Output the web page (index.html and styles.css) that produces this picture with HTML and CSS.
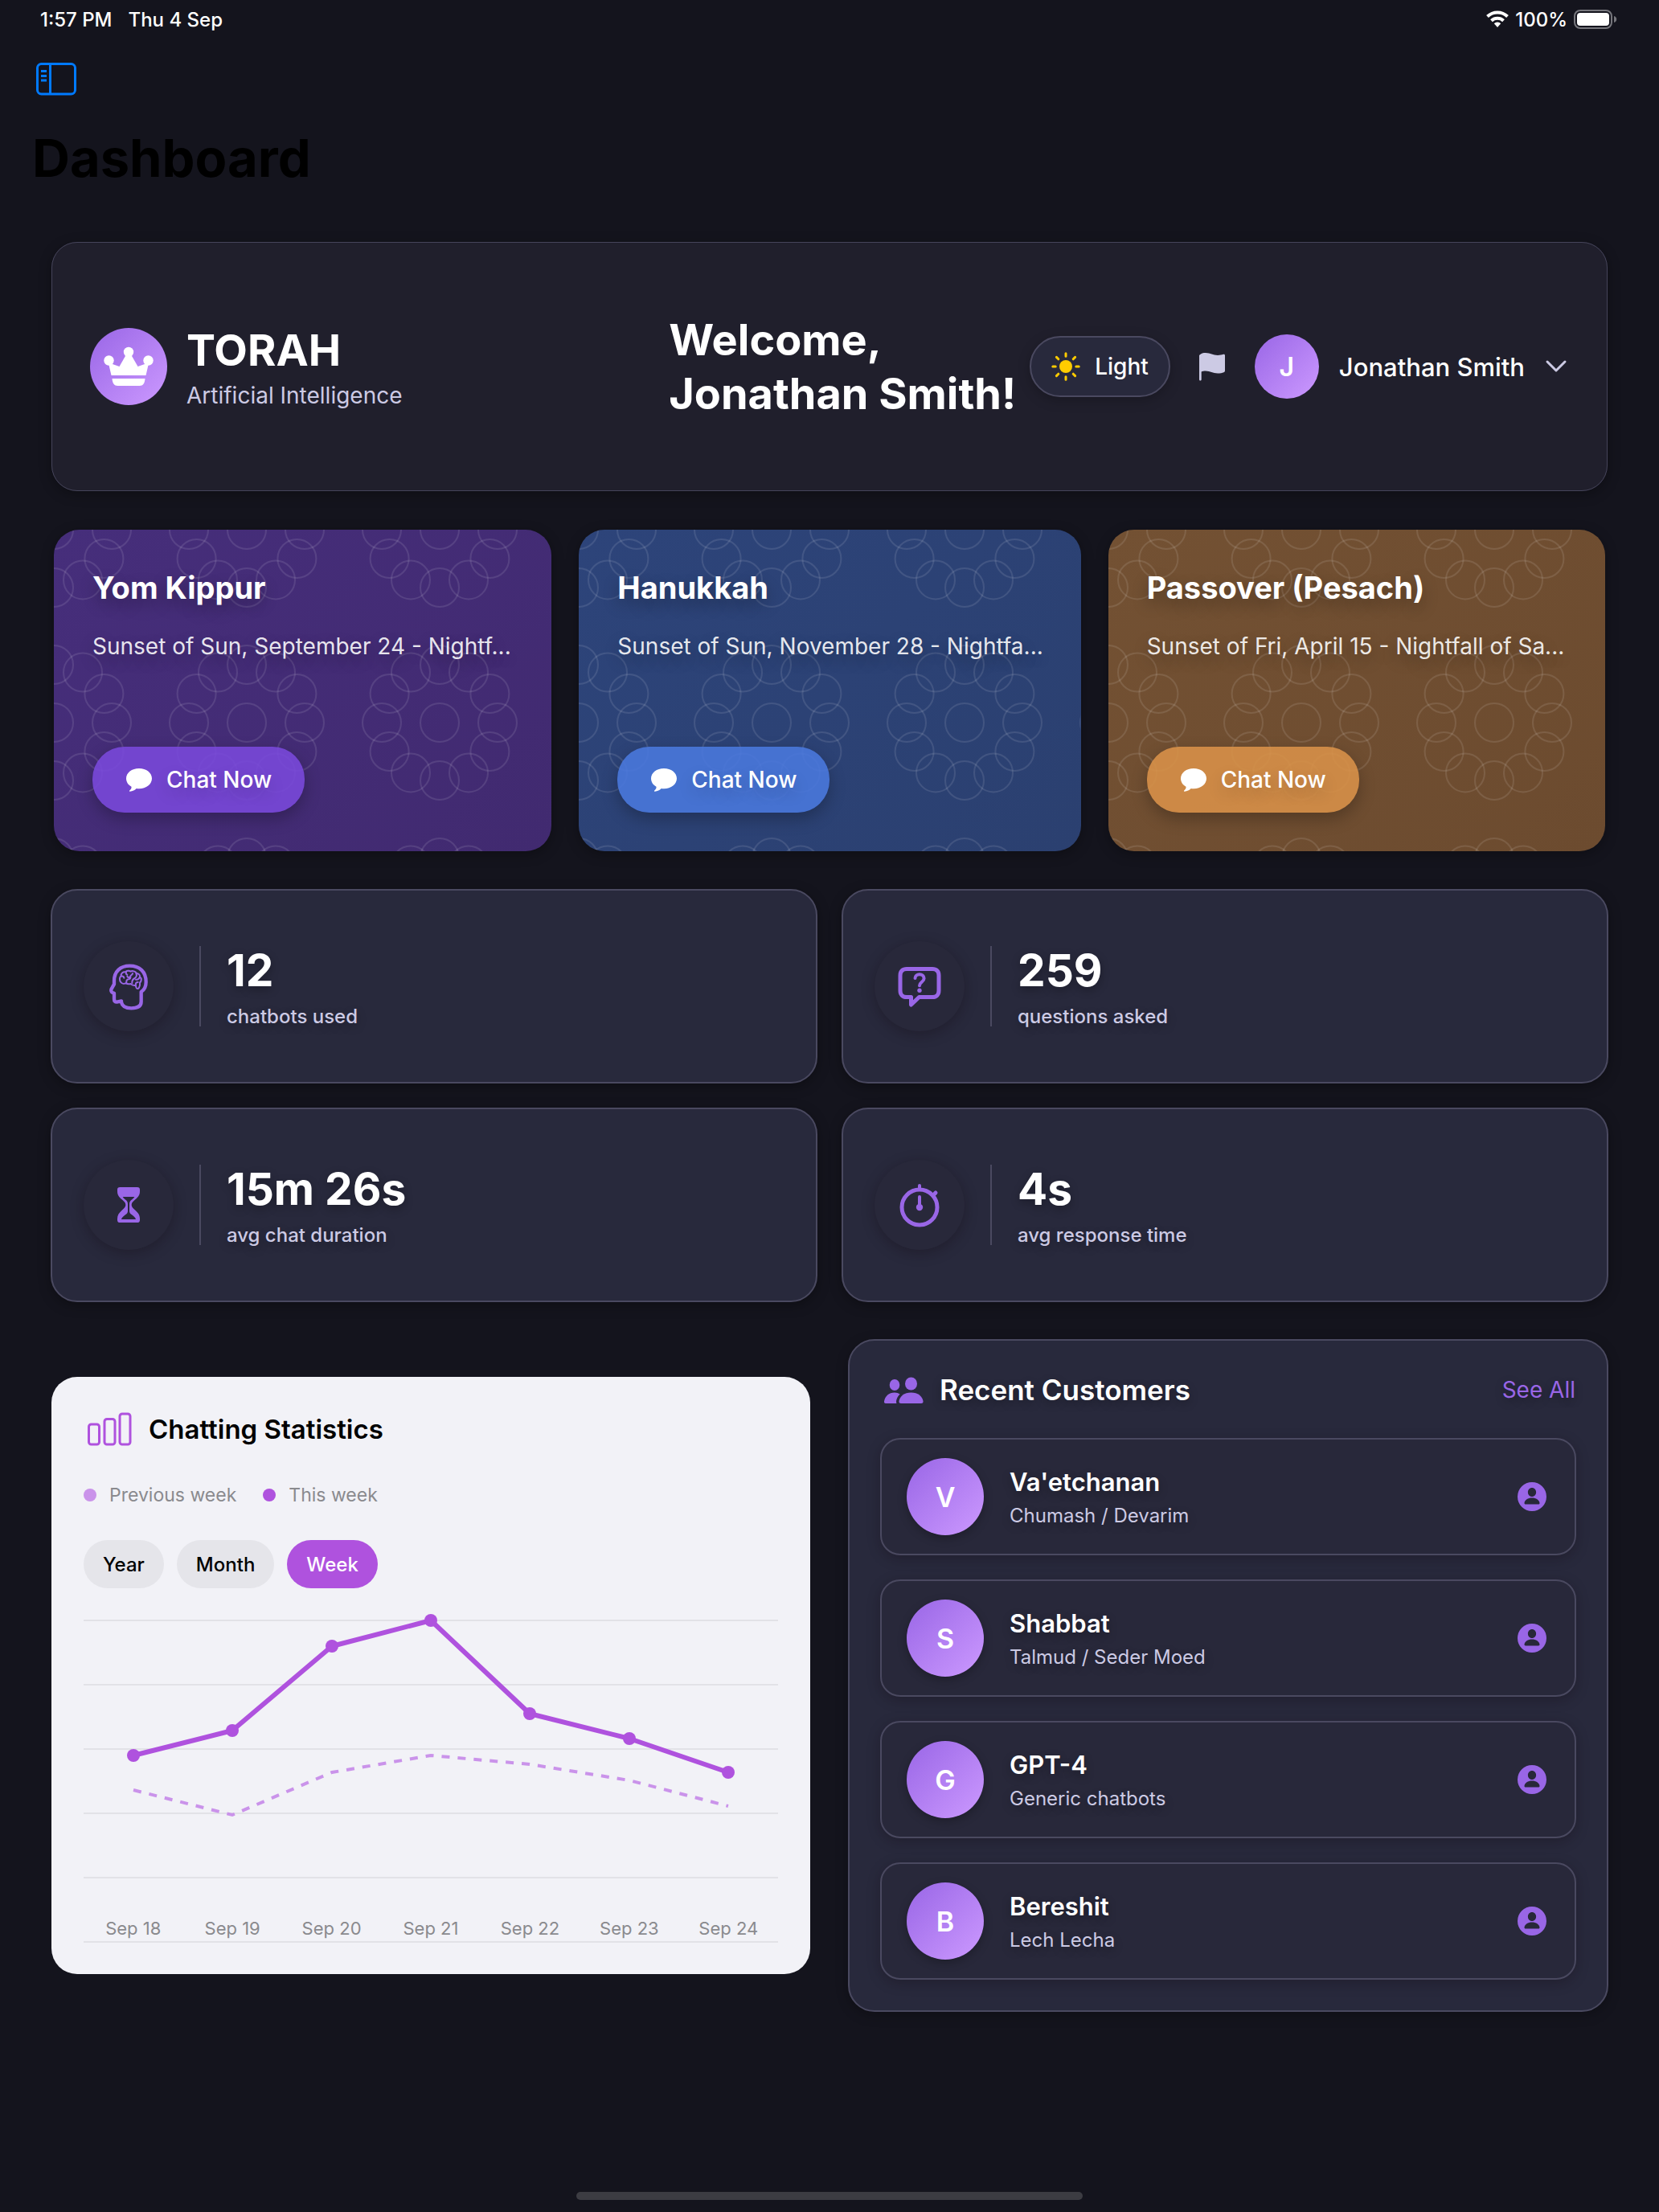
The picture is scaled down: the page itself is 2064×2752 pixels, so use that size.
FILE: index.html
```html
<!DOCTYPE html>
<html lang="en">
<head>
<meta charset="utf-8">
<meta name="viewport" content="width=device-width, initial-scale=1">
<title>Dashboard</title>
<link rel="stylesheet" href="styles.css">
</head>
<body>
<svg class="sprite" aria-hidden="true">
  <defs>
    <pattern id="rings" width="240" height="240" patternUnits="userSpaceOnUse" x="-120" y="-120">
      <g fill="none" stroke="#fff" stroke-opacity=".1" stroke-width="2">
        <circle cx="120" cy="120" r="24"/>
        <circle cx="192" cy="120" r="24"/><circle cx="182.4" cy="156" r="24"/><circle cx="156" cy="182.4" r="24"/>
        <circle cx="120" cy="192" r="24"/><circle cx="84" cy="182.4" r="24"/><circle cx="57.6" cy="156" r="24"/>
        <circle cx="48" cy="120" r="24"/><circle cx="57.6" cy="84" r="24"/><circle cx="84" cy="57.6" r="24"/>
        <circle cx="120" cy="48" r="24"/><circle cx="156" cy="57.6" r="24"/><circle cx="182.4" cy="84" r="24"/>
      </g>
    </pattern>
    <symbol id="bubble" viewBox="0 0 34 30">
      <path fill="currentColor" d="M17 1C8 1 1 6.400 1 13.500c0 4.300 2.500 8 6.500 10.300.4 2-1 3.700-2.300 4.800-.6.500-.3 1.300.5 1.200 3.300-.3 6-1.800 8-3.800 1.100.2 2.200.2 3.300.2 9 0 16-5.600 16-12.700S26 1 17 1z"/>
    </symbol>
    <symbol id="person" viewBox="0 0 36 36">
      <path fill="currentColor" fill-rule="evenodd" d="M18 0a18 18 0 1 1 0 36 18 18 0 0 1 0-36zM18 7c-3 0-5.100 2.400-5.100 5.500S15 18 18 18s5.100-2.400 5.100-5.500S21 7 18 7zM10 27.400h16c1 0 1.600-.6 1.500-1.500-.5-4-4.500-6.500-9.500-6.500s-9 2.500-9.500 6.500c-.1.900.5 1.500 1.500 1.500z"/>
    </symbol>
  </defs>
</svg>

<header class="status">
  <div class="status-group"><span>1:57 PM</span><span>Thu 4 Sep</span></div>
  <div class="status-right">
    <svg width="28" height="22" viewBox="0 0 28 22" aria-label="Wi-Fi">
      <g fill="none" stroke="#fff" stroke-width="4"><path d="M1.500 7.500a18 18 0 0 1 25 0"/><path d="M6.500 12.700a11 11 0 0 1 15 0"/></g>
      <path fill="#fff" d="M9.800 16.200a6.200 6.200 0 0 1 8.400 0L14 21z"/>
    </svg>
    <span>100%</span>
    <svg width="54" height="24" viewBox="0 0 54 24" aria-label="Battery full">
      <rect x="1" y="1" width="46" height="22" rx="7" fill="none" stroke="#76767c" stroke-width="2"/>
      <rect x="4" y="4" width="40" height="16" rx="4" fill="#fff"/>
      <path d="M50 8c2 .6 3.200 2 3.200 4s-1.200 3.400-3.200 4z" fill="#76767c"/>
    </svg>
  </div>
</header>

<nav class="toolbar">
  <button class="icon-button" type="button" aria-label="Toggle sidebar">
    <svg width="52" height="42" viewBox="0 0 52 42" fill="none" stroke="currentColor" stroke-width="3">
      <rect x="2.500" y="2.500" width="47" height="37.500" rx="5"/>
      <path d="M18.500 3v37M7 11.500h7M7 17.500h7M7 23h7"/>
    </svg>
  </button>
</nav>

<h1 class="page-title">Dashboard</h1>

<main class="main">
  <section class="hero">
    <div class="brand">
      <span class="brand-mark">
        <svg width="64" height="56" viewBox="-32 -28 64 56" fill="#fff">
          <circle cx="-24.500" cy="-7.500" r="6.200"/><circle cx="0" cy="-18" r="6.200"/><circle cx="24.500" cy="-7.500" r="6.200"/>
          <path d="M-25-4-21.500 11h43L25-4 20-3 11.500 0 3.500-14h-7L-11.500 0-20-3z"/>
          <path d="M-20.500 15h41c-.5 6-2.500 9-7 9h-27c-4.500 0-6.500-3-7-9z"/>
        </svg>
      </span>
      <div>
        <div class="brand-name">TORAH</div>
        <div class="brand-sub">Artificial Intelligence</div>
      </div>
    </div>
    <div class="hero-right">
      <h2 class="welcome">Welcome,<br>Jonathan Smith!</h2>
      <button class="theme" type="button">
        <svg width="36" height="36" viewBox="-18 -18 36 36">
          <circle r="8" fill="#ffcc00"/>
          <path stroke="#ffcc00" stroke-width="3" stroke-linecap="round" d="M12.800 0h3.400M-12.800 0h-3.400M0-12.800v-3.400M0 12.800v3.400M9.200-9.200l2.400-2.400M-9.200-9.200l-2.400-2.400M9.200 9.200l2.400 2.400M-9.200 9.200l-2.400 2.400"/>
        </svg>
        Light
      </button>
      <button class="icon-button flag" type="button" aria-label="Flag">
        <svg width="34" height="36" viewBox="0 0 34 36" fill="currentColor">
          <path d="M1 4C3.500 1.500 6 1 9 1c6 0 9 3 15 3 3 0 5-.5 7-1.200 1.200-.4 2 .2 2 1.400V23c0 1.200-.5 1.800-1.500 2.200C29.500 26 27 26.500 24 26.500c-6 0-9.500-3-15-3-2.300 0-4 .3-5.300.9V34c0 2-2.700 2-2.700 0z"/>
        </svg>
      </button>
      <button class="account" type="button">
        <span class="avatar avatar-small">J</span>
        <span>Jonathan Smith</span>
        <svg width="28" height="18" viewBox="0 0 28 18" fill="none" stroke="#cccae4" stroke-width="3" stroke-linecap="round" stroke-linejoin="round"><path d="M3 3l11 11L25 3"/></svg>
      </button>
    </div>
  </section>

  <section class="holidays">
    <article class="holiday purple">
      <svg class="rings" aria-hidden="true"><rect width="100%" height="100%" fill="url(#rings)"/></svg>
      <h3>Yom Kippur</h3>
      <p>Sunset of Sun, September 24 - Nightf...</p>
      <button type="button"><svg width="34" height="30"><use href="#bubble"/></svg>Chat Now</button>
    </article>
    <article class="holiday blue">
      <svg class="rings" aria-hidden="true"><rect width="100%" height="100%" fill="url(#rings)"/></svg>
      <h3>Hanukkah</h3>
      <p>Sunset of Sun, November 28 - Nightfa...</p>
      <button type="button"><svg width="34" height="30"><use href="#bubble"/></svg>Chat Now</button>
    </article>
    <article class="holiday orange">
      <svg class="rings" aria-hidden="true"><rect width="100%" height="100%" fill="url(#rings)"/></svg>
      <h3>Passover (Pesach)</h3>
      <p>Sunset of Fri, April 15 - Nightfall of Sa...</p>
      <button type="button"><svg width="34" height="30"><use href="#bubble"/></svg>Chat Now</button>
    </article>
  </section>

  <section class="stats">
    <article class="stat">
      <span class="stat-icon">
        <svg width="56" height="64" viewBox="96 104 168 192" fill="none" stroke="currentColor" stroke-linejoin="round" stroke-linecap="round">
          <path stroke-width="13" d="M153 255v5c3 14 17 22 37 22 25 0 37-8 37-24v-37c12-8 18-21 18-37 0-38-24-60-61-60-35 0-58 21-58 56v12l-11 20c-2 7 3 13 11 14v22c0 7 4 11 10 11z"/>
          <g stroke-width="6">
            <path d="M152 186c-8-8-6-20 0-25-1-9 8-16 16-14 5-6 15-6 19-2 8-4 19 0 22 6 9 1 14 8 13 14 8 6 6 17 0 21 1 8-1 15-3 19-2 5-8 6-10 1l-3-9c-10 1-15-2-18-6-8 2-14 1-18-3-6 4-14 2-18-2z"/>
            <path d="M153 163c5-1 9 2 10 6M171 148c-2 4 0 8 4 9M175 163c2 6 10 5 12-1 2-5 8-4 8-10M187 163c1 6-2 10-7 11-7 1-9 6-8 13M208 152c4 9 1 14-5 18-6 3-11 7-10 18M221 166c-2 7-7 10-14 9M207 196c-2-7 2-11 8-11"/>
          </g>
        </svg>
      </span>
      <div class="stat-text"><div class="stat-value">12</div><div class="stat-label">chatbots used</div></div>
    </article>
    <article class="stat">
      <span class="stat-icon">
        <svg width="64" height="64" viewBox="0 0 64 64" fill="none" stroke="currentColor" stroke-linejoin="round" stroke-linecap="round">
          <path stroke-width="5" d="M16 10.500h32c5 0 8 3 8 8v19c0 5-3 8-8 8H31.500L21.500 55v-9.500H16c-5 0-8-3-8-8v-19c0-5 3-8 8-8z"/>
          <path stroke-width="4" d="M26.500 22c0-3 2.500-4.800 5.500-4.800s5.600 1.800 5.600 5c0 4.500-5.600 4.600-5.600 9"/>
          <circle cx="32" cy="37.200" r="2.700" fill="currentColor" stroke="none"/>
        </svg>
      </span>
      <div class="stat-text"><div class="stat-value">259</div><div class="stat-label">questions asked</div></div>
    </article>
    <article class="stat">
      <span class="stat-icon">
        <svg width="56" height="64" viewBox="96 921 168 192" fill="currentColor">
          <path fill-rule="evenodd" d="M148 951h64c7 0 10 3 10 9v6c0 14-6 22-17 31-8 7-14 12-14 20s6 13 14 20c11 10 17 18 17 32v4c0 7-3 10-10 10h-64c-7 0-10-3-10-10v-4c0-14 6-22 17-32 8-7 14-12 14-20s-6-13-14-20c-11-9-17-17-17-31v-6c0-6 3-9 10-9zM158 987c3 5 8 9 12 12 5 4 7 9 7 15v26c0 6-3 9-8 13-8 7-15 11-16 18h54c-1-7-8-11-16-18-5-4-8-7-8-13v-26c0-6 2-11 7-15 4-3 9-7 12-12z"/>
        </svg>
      </span>
      <div class="stat-text"><div class="stat-value">15m 26s</div><div class="stat-label">avg chat duration</div></div>
    </article>
    <article class="stat">
      <span class="stat-icon">
        <svg width="64" height="64" viewBox="0 0 64 64" fill="none" stroke="currentColor" stroke-linecap="round">
          <circle cx="32" cy="35" r="22" stroke-width="5"/>
          <path stroke-width="4" d="M32 8v5M32 22v12"/>
          <path stroke-width="5" d="M49 20l3-3"/>
          <circle cx="32" cy="35" r="4.200" fill="currentColor" stroke="none"/>
        </svg>
      </span>
      <div class="stat-text"><div class="stat-value">4s</div><div class="stat-label">avg response time</div></div>
    </article>
  </section>

  <section class="bottom">
    <article class="chart-card">
      <div class="chart-head">
        <svg width="66" height="50" viewBox="0 0 66 50" fill="none" stroke="currentColor" stroke-width="3">
          <rect x="6.500" y="19" width="13" height="25" rx="3"/><rect x="26" y="12.500" width="13" height="31.500" rx="3"/><rect x="45" y="6" width="13" height="38" rx="3"/>
        </svg>
        <h2>Chatting Statistics</h2>
      </div>
      <div class="legend"><span class="key previous">Previous week</span><span class="key">This week</span></div>
      <div class="ranges">
        <button type="button">Year</button><button type="button">Month</button><button type="button" class="active">Week</button>
      </div>
      <div class="chart">
        <svg viewBox="0 0 864 400" role="img" aria-label="Chats per day, this week and previous week">
          <path stroke="#e2e2e7" stroke-width="2" d="M0 0h864M0 80h864M0 160h864M0 240h864M0 320h864M0 400h864"/>
          <polyline fill="none" stroke="#ca93ea" stroke-width="4" stroke-dasharray="10 10" points="62,211 185,242 309,189 432,168 555,179 679,199 802,231"/>
          <polyline fill="none" stroke="#af52de" stroke-width="6" stroke-linejoin="round" points="62,168 185,137 309,32 432,0 555,116 679,147 802,189"/>
          <g fill="#af52de"><circle cx="62" cy="168" r="8"/><circle cx="185" cy="137" r="8"/><circle cx="309" cy="32" r="8"/><circle cx="432" cy="0" r="8"/><circle cx="555" cy="116" r="8"/><circle cx="679" cy="147" r="8"/><circle cx="802" cy="189" r="8"/></g>
        </svg>
        <div class="days"><span>Sep 18</span><span>Sep 19</span><span>Sep 20</span><span>Sep 21</span><span>Sep 22</span><span>Sep 23</span><span>Sep 24</span></div>
      </div>
    </article>

    <article class="customers">
      <div class="customers-head">
        <svg width="54" height="40" viewBox="0 0 54 40" fill="currentColor">
          <ellipse cx="17" cy="14" rx="6.300" ry="7"/><ellipse cx="37.500" cy="12.500" rx="7.500" ry="8"/>
          <path d="M19.500 37H6c-1.600 0-2.300-.9-2-2.500C5 28 10 23.500 17 23.500c2.500 0 4.800.7 6.600 2-3 3-4.600 6.500-4.600 9.500 0 .7.200 1.400.5 2z"/>
          <path d="M37.500 23.500c8.500 0 14 4.800 15 10.500.3 1.900-.5 3-2.500 3H25c-2 0-2.800-1.100-2.500-3 1-5.700 6.500-10.500 15-10.500z"/>
        </svg>
        <h2>Recent Customers</h2>
        <a href="#all">See All</a>
      </div>
      <div class="customer">
        <span class="avatar">V</span>
        <div class="customer-text"><div class="customer-name">Va'etchanan</div><div class="customer-sub">Chumash / Devarim</div></div>
        <svg class="person" width="36" height="36"><use href="#person"/></svg>
      </div>
      <div class="customer">
        <span class="avatar">S</span>
        <div class="customer-text"><div class="customer-name">Shabbat</div><div class="customer-sub">Talmud / Seder Moed</div></div>
        <svg class="person" width="36" height="36"><use href="#person"/></svg>
      </div>
      <div class="customer">
        <span class="avatar">G</span>
        <div class="customer-text"><div class="customer-name">GPT-4</div><div class="customer-sub">Generic chatbots</div></div>
        <svg class="person" width="36" height="36"><use href="#person"/></svg>
      </div>
      <div class="customer">
        <span class="avatar">B</span>
        <div class="customer-text"><div class="customer-name">Bereshit</div><div class="customer-sub">Lech Lecha</div></div>
        <svg class="person" width="36" height="36"><use href="#person"/></svg>
      </div>
    </article>
  </section>
</main>
<div class="home-indicator"></div>
</body>
</html>
```
FILE: styles.css
```css
* { box-sizing: border-box; }

body {
  margin: 0;
  min-height: 100vh;
  display: flex;
  flex-direction: column;
  background: #14141d;
  color: #fff;
  font-family: Inter, "Liberation Sans", sans-serif;
  font-size: 28px;
}

h1, h2, h3, p { margin: 0; }
svg { display: block; flex: none; }
button {
  font: inherit;
  color: inherit;
  border: 0;
  padding: 0;
  background: none;
  white-space: nowrap;
}
.sprite { position: absolute; width: 0; height: 0; }

.status {
  display: flex;
  justify-content: space-between;
  align-items: center;
  height: 48px;
  padding: 0 52px 0 50px;
  font-size: 24px;
  font-weight: 500;
}
.status-group { display: flex; gap: 20px; }
.status-right { display: flex; align-items: center; gap: 8px; }

.toolbar { padding: 29px 44px; }
.icon-button { display: block; color: #007aff; }

.page-title {
  padding: 0 40px;
  font-size: 65px;
  line-height: 98px;
  font-weight: 700;
  color: #000;
}

.main {
  display: flex;
  flex-direction: column;
  gap: 48px;
  padding: 55px 64px 0;
}

/* Header card */
.hero {
  display: flex;
  justify-content: space-between;
  align-items: center;
  min-height: 310px;
  padding: 40px 50px 40px 48px;
  border-radius: 32px;
  background: #201f2c;
  outline: 1px solid #45445a;
  outline-offset: -1px;
  box-shadow: 0 4px 16px rgba(0, 0, 0, .3);
}
.brand { display: flex; align-items: center; gap: 24px; }
.brand-mark {
  display: grid;
  place-items: center;
  width: 96px;
  height: 96px;
  border-radius: 50%;
  background: linear-gradient(135deg, #9966e6, #cc99ff);
}
.brand-name { font-size: 54px; line-height: 68px; font-weight: 700; }
.brand-sub { margin-top: 4px; font-size: 28px; line-height: 36px; color: #cccae4; }

.hero-right { display: flex; align-items: center; }
.welcome {
  margin-right: 18px;
  font-size: 54px;
  line-height: 67px;
  font-weight: 700;
  white-space: nowrap;
}
.theme {
  display: flex;
  align-items: center;
  gap: 18px;
  height: 74px;
  padding: 0 26px;
  border-radius: 37px;
  background: #28293c;
  outline: 2px solid #4a4960;
  outline-offset: -1px;
  font-size: 28px;
  font-weight: 500;
  box-shadow: 0 4px 16px rgba(0, 0, 0, .25);
}
.flag { margin: 0 36px; color: #cccae4; }
.account { display: flex; align-items: center; gap: 25px; font-size: 31px; font-weight: 500; }
.avatar {
  display: grid;
  place-items: center;
  flex: none;
  width: 96px;
  height: 96px;
  border-radius: 50%;
  background: linear-gradient(135deg, #9966e6, #cc99ff);
  font-size: 34px;
  font-weight: 600;
  box-shadow: 0 4px 12px rgba(0, 0, 0, .25);
}
.avatar-small { width: 80px; height: 80px; font-size: 32px; box-shadow: none; }

/* Holiday cards */
.holidays {
  display: grid;
  grid-template-columns: 619fr 624fr 618fr;
  gap: 34px;
  padding: 0 3px;
}
.holiday {
  position: relative;
  display: flex;
  flex-direction: column;
  align-items: flex-start;
  min-width: 0;
  min-height: 400px;
  padding: 48px;
  border-radius: 32px;
  overflow: hidden;
  box-shadow: 0 4px 16px rgba(0, 0, 0, .3);
}
.rings { position: absolute; inset: 0; width: 100%; height: 100%; }
.holiday h3, .holiday p { position: relative; text-shadow: 0 8px 20px rgba(0, 0, 0, .3); }
.holiday h3 { font-size: 38px; line-height: 48px; font-weight: 700; }
.holiday p {
  margin-top: 32px;
  font-size: 28px;
  line-height: 34px;
  white-space: nowrap;
  color: rgba(255, 255, 255, .9);
}
.holiday button {
  position: relative;
  display: flex;
  align-items: center;
  gap: 17px;
  height: 82px;
  margin-top: auto;
  padding: 0 41px;
  border-radius: 40px;
  font-size: 28px;
  font-weight: 500;
  text-shadow: 0 8px 20px rgba(0, 0, 0, .2);
  box-shadow: 0 8px 20px rgba(0, 0, 0, .25);
}
.purple { background: linear-gradient(135deg, #462e7b, #412a70); }
.blue { background: linear-gradient(135deg, #2d447a, #2b4070); }
.orange { background: linear-gradient(135deg, #735133, #6c4b2f); }
.purple button { background: rgba(122, 73, 220, .88); }
.blue button { background: rgba(74, 121, 222, .88); }
.orange button { background: rgba(217, 146, 73, .88); }

/* Stat tiles */
.stats { display: grid; grid-template-columns: 1fr 1fr; gap: 32px; }
.stat {
  display: flex;
  align-items: center;
  min-height: 240px;
  padding: 0 40px;
  border-radius: 32px;
  background: #28293c;
  outline: 2px solid #4a4960;
  outline-offset: -1px;
  box-shadow: 0 4px 16px rgba(0, 0, 0, .35);
}
.stat-icon {
  display: grid;
  place-items: center;
  width: 112px;
  height: 112px;
  border-radius: 50%;
  color: #9966e6;
  background: #28283a;
  box-shadow: 0 4px 16px rgba(20, 12, 20, .35);
}
.stat-text {
  position: relative;
  margin-left: 66px;
  text-shadow: 0 4px 12px rgba(0, 0, 0, .3);
}
.stat-text::before {
  content: "";
  position: absolute;
  left: -34px;
  top: 4px;
  bottom: 4px;
  width: 2px;
  background: #4a4960;
}
.stat-value { font-size: 55px; line-height: 68px; font-weight: 700; }
.stat-label { margin-top: 8px; font-size: 24px; line-height: 32px; font-weight: 500; color: #cccae4; }

/* Bottom row */
.bottom { display: grid; grid-template-columns: 1fr 1fr; gap: 48px; align-items: center; }

.chart-card {
  display: flex;
  flex-direction: column;
  gap: 40px;
  padding: 40px;
  border-radius: 32px;
  background: #f2f2f7;
  color: #000;
}
.chart-head { display: flex; align-items: center; gap: 15px; height: 50px; color: #af52de; }
.chart-head h2 { font-size: 33px; line-height: 50px; font-weight: 600; color: #000; }
.legend { display: flex; gap: 33px; padding-top: 1px; font-size: 23px; line-height: 32px; color: #8a8a8e; }
.key { display: flex; align-items: center; gap: 16px; }
.key::before { content: ""; width: 16px; height: 16px; border-radius: 50%; background: #af52de; }
.key.previous::before { background: #ca93ea; }
.ranges { display: flex; gap: 16px; }
.ranges button {
  height: 60px;
  padding: 0 24px;
  border-radius: 30px;
  background: #e5e5ea;
  font-size: 24px;
  font-weight: 500;
}
.ranges .active { background: #af52de; color: #fff; }
.chart { display: grid; }
.chart > * { grid-area: 1 / 1; }
.chart svg { width: 100%; overflow: visible; }
.days {
  display: grid;
  grid-template-columns: repeat(7, 1fr);
  align-self: end;
  padding-bottom: 3px;
  font-size: 22px;
  line-height: 28px;
  text-align: center;
  color: #8a8a8e;
}

.customers {
  display: flex;
  flex-direction: column;
  gap: 32px;
  padding: 40px;
  border-radius: 32px;
  background: #28293c;
  outline: 2px solid #4a4960;
  outline-offset: -1px;
  box-shadow: 0 4px 16px rgba(0, 0, 0, .3);
}
.customers-head {
  display: flex;
  align-items: center;
  height: 43px;
  margin-bottom: 8px;
  color: #9966e6;
  text-shadow: 0 4px 12px rgba(0, 0, 0, .3);
}
.customers-head h2 { margin-left: 19px; color: #fff; font-size: 35px; font-weight: 600; }
.customers-head a { margin-left: auto; color: #9966e6; font-size: 28px; text-decoration: none; }
.customer {
  display: flex;
  align-items: center;
  height: 144px;
  padding: 0 36px 0 32px;
  border-radius: 24px;
  background: #28283a;
  outline: 2px solid #4a4960;
  outline-offset: -1px;
  box-shadow: 0 4px 16px rgba(20, 12, 20, .35);
}
.customer-text { margin-left: 32px; padding-top: 2px; text-shadow: 0 4px 12px rgba(0, 0, 0, .3); }
.customer-name { font-size: 31px; line-height: 40px; font-weight: 600; }
.customer-sub { margin-top: 6px; font-size: 24px; line-height: 32px; color: #cccae4; }
.person { margin-left: auto; color: #9966e6; }

.home-indicator {
  width: 630px;
  height: 10px;
  margin: auto auto 15px;
  border-radius: 5px;
  background: #3c3c42;
}
```
